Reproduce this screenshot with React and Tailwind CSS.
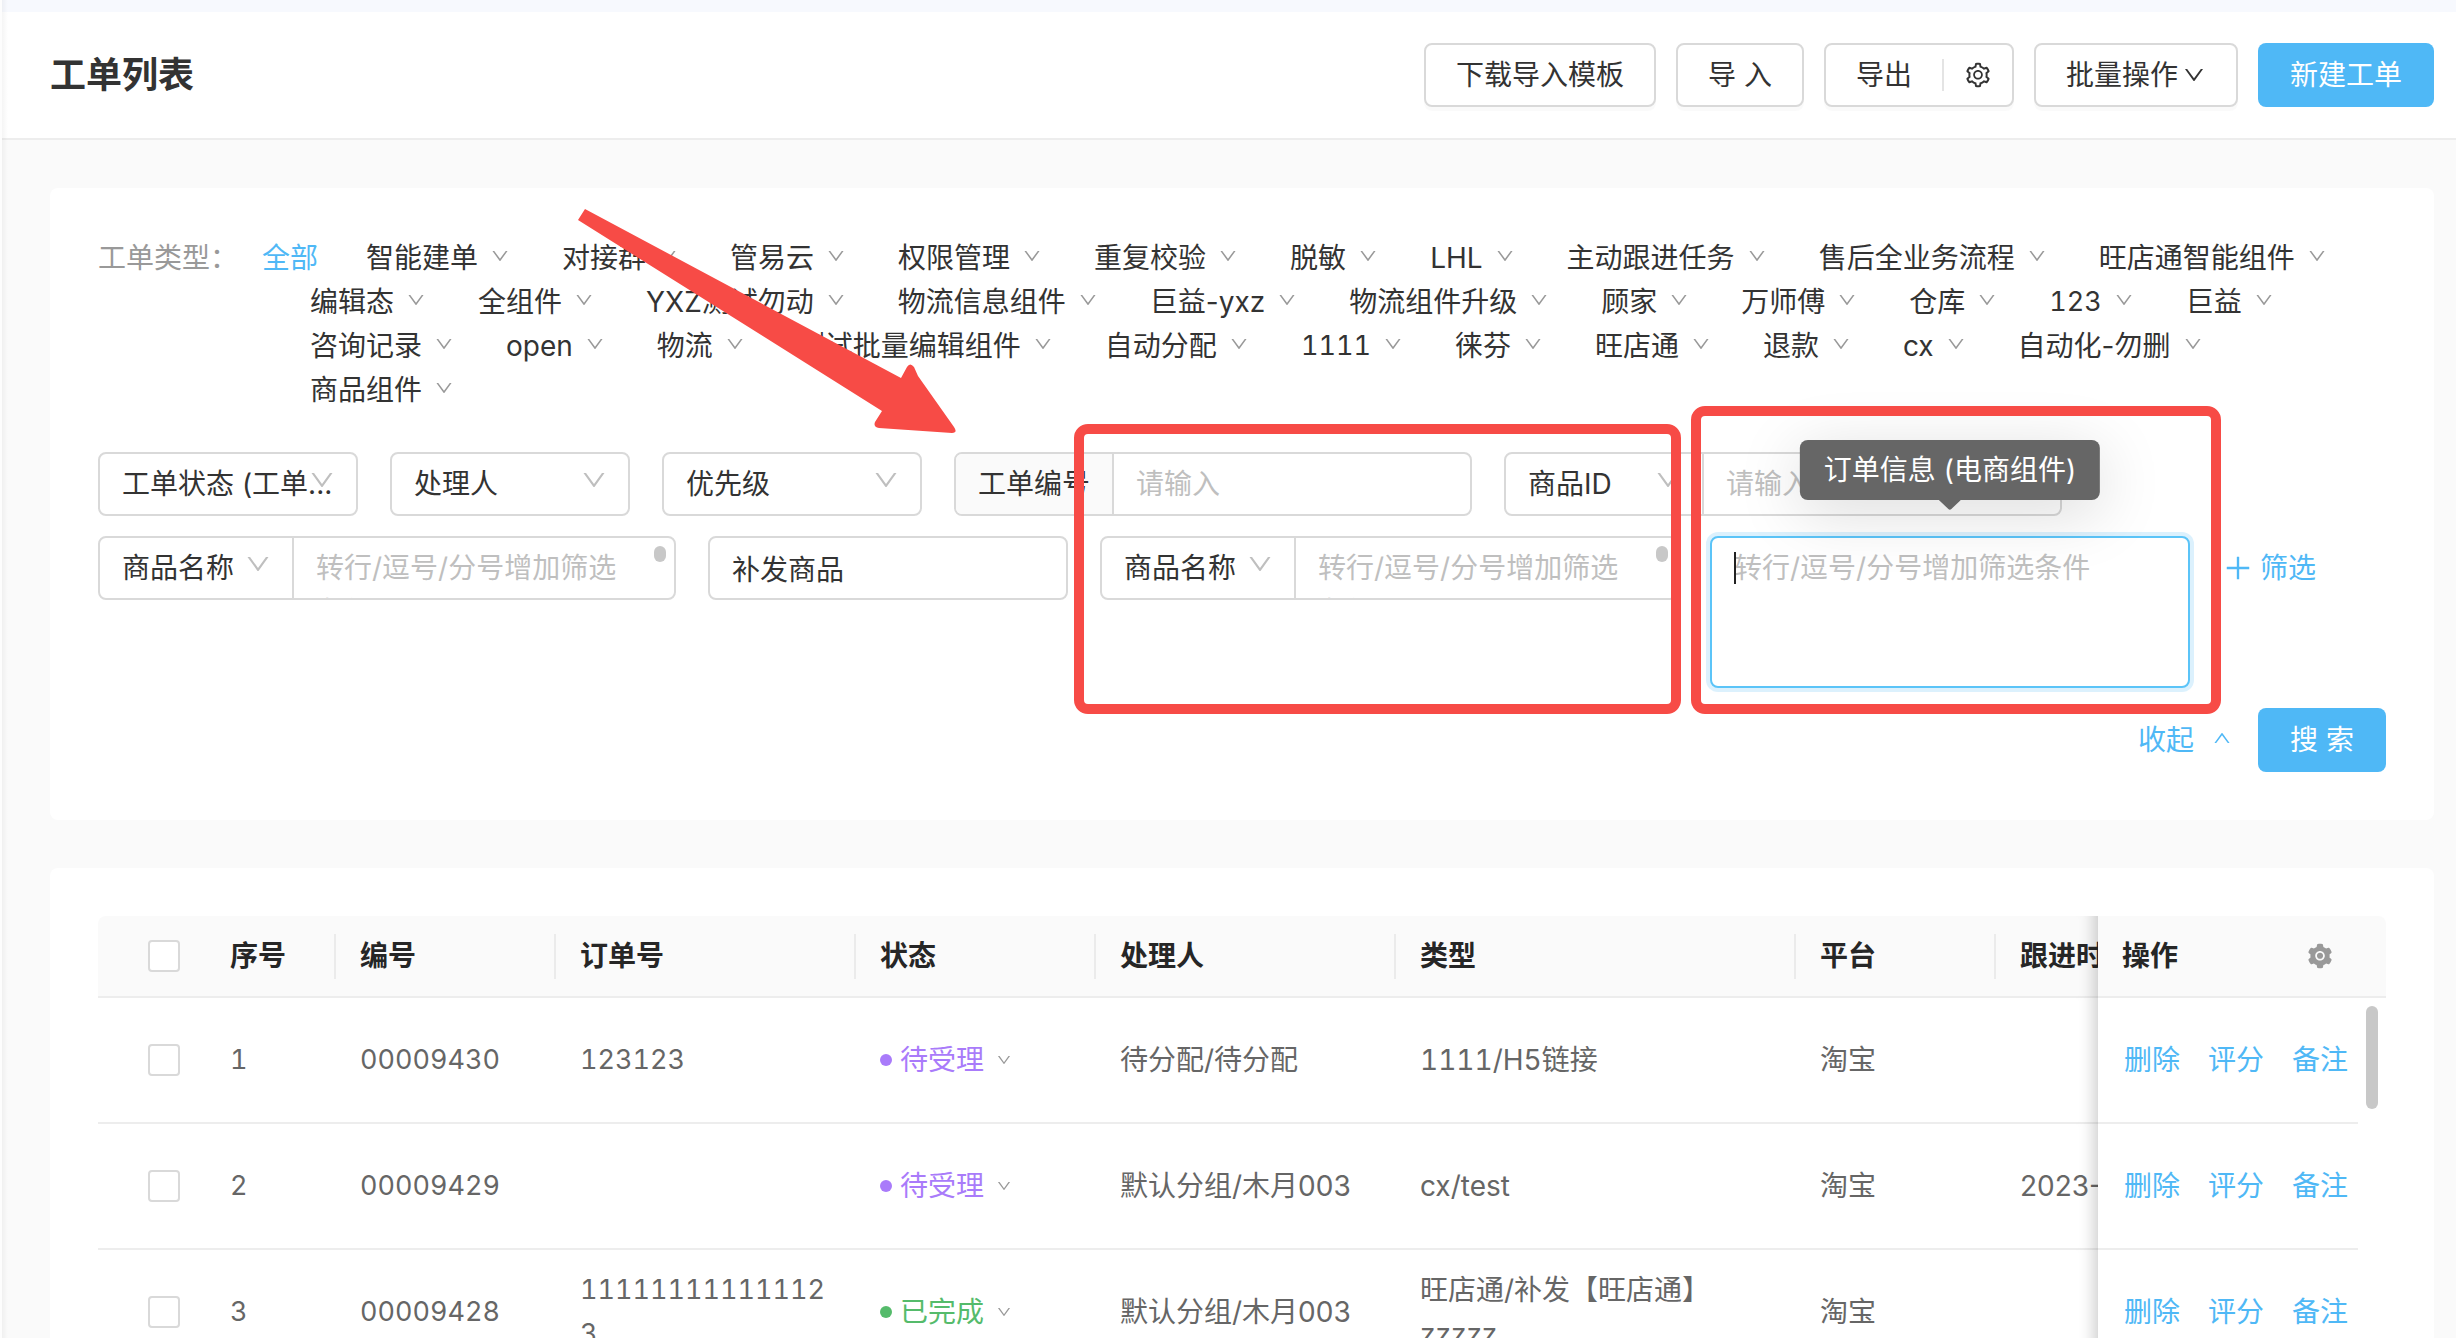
import React from "react";
import {
  AiOutlineDown,
  AiOutlineUp,
  AiOutlinePlus,
  AiOutlineSetting,
  AiFillSetting,
} from "react-icons/ai";

const TYPE_ROWS = [
  ["智能建单", "对接群", "管易云", "权限管理", "重复校验", "脱敏", "LHL", "主动跟进任务", "售后全业务流程", "旺店通智能组件"],
  ["编辑态", "全组件", "YXZ测试勿动", "物流信息组件", "巨益-yxz", "物流组件升级", "顾家", "万师傅", "仓库", "123", "巨益"],
  ["咨询记录", "open", "物流", "测试批量编辑组件", "自动分配", "1111", "徕芬", "旺店通", "退款", "cx", "自动化-勿删"],
  ["商品组件"],
];

const COLUMNS = [
  { title: "序号", width: "w-[130px]" },
  { title: "编号", width: "w-[220px]" },
  { title: "订单号", width: "w-[300px]" },
  { title: "状态", width: "w-[240px]" },
  { title: "处理人", width: "w-[300px]" },
  { title: "类型", width: "w-[400px]" },
  { title: "平台", width: "w-[200px]" },
  { title: "跟进时间", width: "w-[300px]" },
];

const ROWS = [
  { id: 1, no: "00009430", order: "123123", status: "待受理", owner: "待分配/待分配", type: "1111/H5链接", platform: "淘宝", follow: "" },
  { id: 2, no: "00009429", order: "", status: "待受理", owner: "默认分组/木月003", type: "cx/test", platform: "淘宝", follow: "2023-" },
  { id: 3, no: "00009428", order: "111111111111123", status: "已完成", owner: "默认分组/木月003", type: "旺店通/补发【旺店通】zzzzz", platform: "淘宝", follow: "" },
];

const STATUS_STYLE = {
  待受理: { text: "text-[#a97bfa]", dot: "bg-[#a97bfa]" },
  已完成: { text: "text-[#55bb6b]", dot: "bg-[#55bb6b]" },
};

function HeaderButton({ className = "", children }) {
  return (
    <button
      type="button"
      className={`flex h-16 items-center justify-center rounded-lg border-2 border-[#d9d9d9] bg-white px-[30px] shadow-[0_4px_0_rgba(0,0,0,0.02)] ${className}`}
    >
      {children}
    </button>
  );
}

function TypeItem({ label }) {
  const numeric = /^\d+$/.test(label);
  return (
    <button type="button" className={`mr-[52px] flex shrink-0 items-center gap-3 ${numeric ? "text-[27px] tabular-nums" : ""}`}>
      {label}
      <AiOutlineDown className="mb-1 size-5 text-[#999]" />
    </button>
  );
}

function Select({ label, className = "", selectClass = "rounded-lg" }) {
  return (
    <div className={`relative h-16 ${className}`}>
      <select
        aria-label={label}
        className={`size-full appearance-none border-2 border-[#d9d9d9] bg-white px-[22px] outline-none ${selectClass}`}
      >
        <option>{label}</option>
      </select>
      <AiOutlineDown className="pointer-events-none absolute top-[14px] right-[22px] size-7 text-[#bfbfbf]" />
    </div>
  );
}

function MultiLineFilter() {
  return (
    <div className="flex w-[578px]">
      <Select label="商品名称" className="w-[196px]" selectClass="rounded-l-lg" />
      <div className="relative -ml-0.5 h-16 flex-1">
        <textarea
          rows={1}
          aria-label="商品名称筛选"
          placeholder="转行/逗号/分号增加筛选条件"
          className="block size-full resize-none overflow-hidden rounded-r-lg border-2 border-[#d9d9d9] bg-white py-2 pr-10 pl-[22px] outline-none placeholder:text-[#bfbfbf]"
        />
        <span className="absolute top-2.5 right-2.5 h-4 w-3 rounded-full bg-[#c8c8c8]" />
      </div>
    </div>
  );
}

function Header() {
  return (
    <header className="flex items-center justify-between border-b-2 border-[#ededed] bg-white py-[31px] pr-[22px] pl-12">
      <h1 className="text-4xl font-semibold">工单列表</h1>
      <div className="flex gap-5">
        <HeaderButton>下载导入模板</HeaderButton>
        <HeaderButton>导 入</HeaderButton>
        <div className="flex h-16 items-center rounded-lg border-2 border-[#d9d9d9] bg-white pr-5 pl-[30px] shadow-[0_4px_0_rgba(0,0,0,0.02)]">
          <button type="button">导出</button>
          <span className="mr-5 ml-[30px] h-8 w-0.5 bg-[#e4e4e4]" />
          <button type="button" aria-label="导出设置">
            <AiOutlineSetting className="size-7" />
          </button>
        </div>
        <HeaderButton className="gap-1">
          批量操作
          <AiOutlineDown className="size-6" />
        </HeaderButton>
        <button type="button" className="h-16 rounded-lg bg-[#4fb8f6] px-8 text-white">
          新建工单
        </button>
      </div>
    </header>
  );
}

function TypeFilter() {
  return (
    <div className="flex flex-col">
      {TYPE_ROWS.map((row, i) => (
        <div key={i} className={i === 0 ? "flex h-11 items-center" : "flex h-11 items-center pl-[212px]"}>
          {i === 0 && (
            <>
              <span className="mr-6 text-[#999]">工单类型：</span>
              <button type="button" className="mr-12 text-[#4fb8f6]">全部</button>
            </>
          )}
          {row.map((label) => (
            <TypeItem key={label} label={label} />
          ))}
        </div>
      ))}
    </div>
  );
}

function FocusedFilter() {
  return (
    <div className="relative w-[480px]">
      <textarea
        aria-label="订单信息"
        placeholder="转行/逗号/分号增加筛选条件"
        className="block h-[152px] w-full resize-none rounded-lg border-2 border-[#5bc4f8] bg-white px-[22px] py-2 shadow-[0_0_0_4px_rgba(79,184,246,0.2)] outline-none placeholder:text-[#bfbfbf]"
      />
      <span className="absolute top-4 left-6 h-8 w-0.5 bg-[#222]" />
      <div
        role="tooltip"
        className="absolute bottom-full left-1/2 mb-9 flex h-[60px] -translate-x-1/2 items-center rounded-lg bg-[#666] px-6 whitespace-nowrap text-white shadow-[0_12px_64px_rgba(0,0,0,0.15)]"
      >
        订单信息 (电商组件)
        <svg viewBox="0 0 22 10" className="absolute top-full left-1/2 h-2.5 w-[22px] -translate-x-1/2" aria-hidden="true">
          <path d="M0 0H22L12.5 9Q11 10.5 9.5 9Z" fill="#666" />
        </svg>
      </div>
    </div>
  );
}

function Annotations() {
  return (
    <div className="pointer-events-none absolute inset-0" aria-hidden="true">
      <svg viewBox="0 0 384 230" className="absolute top-[18px] left-[526px] h-[230px] w-[384px]">
        <path
          d="M9 3 L325 172 L331 161 Q334 156 338 161 L342 170 L378 221 Q382 227 376 227 L303 222 Q297 221 299 216 L306 205 L2 14 Z"
          fill="#f74b46"
        />
      </svg>
      <div className="absolute top-[236px] left-[1024px] h-[290px] w-[607px] rounded-[14px] border-10 border-[#f74b46]" />
      <div className="absolute top-[218px] left-[1641px] h-[308px] w-[530px] rounded-[14px] border-10 border-[#f74b46]" />
    </div>
  );
}

function FilterCard() {
  return (
    <section className="relative rounded-lg bg-white p-12">
      <TypeFilter />
      <div className="mt-10 flex gap-8">
        <Select label="工单状态 (工单..." className="w-[260px]" />
        <Select label="处理人" className="w-[240px]" />
        <Select label="优先级" className="w-[260px]" />
        <div className="flex h-16 w-[518px] rounded-lg border-2 border-[#d9d9d9]">
          <label htmlFor="ticket-no" className="flex items-center rounded-l-md border-r-2 border-[#d9d9d9] bg-[#fafafa] px-[22px]">
            工单编号
          </label>
          <input id="ticket-no" placeholder="请输入" className="min-w-0 flex-1 rounded-r-md px-[22px] outline-none placeholder:text-[#bfbfbf]" />
        </div>
        <div className="flex w-[558px]">
          <Select label="商品ID" className="w-[200px]" selectClass="rounded-l-lg" />
          <input
            aria-label="商品ID值"
            placeholder="请输入"
            className="-ml-0.5 h-16 min-w-0 flex-1 rounded-r-lg border-2 border-[#d9d9d9] px-[22px] outline-none placeholder:text-[#bfbfbf]"
          />
        </div>
      </div>
      <div className="mt-5 flex items-start gap-8">
        <MultiLineFilter />
        <input aria-label="补发商品" defaultValue="补发商品" className="h-16 w-[360px] rounded-lg border-2 border-[#d9d9d9] px-[22px] outline-none" />
        <MultiLineFilter />
        <FocusedFilter />
        <button type="button" className="flex h-16 items-center gap-1.5 text-[#4fb8f6]">
          <AiOutlinePlus className="size-8" />
          筛选
        </button>
      </div>
      <div className="mt-5 flex items-center justify-end">
        <button type="button" className="mr-[26px] flex items-center gap-[18px] text-[#4fb8f6]">
          收起
          <AiOutlineUp className="mb-1 size-5" />
        </button>
        <button type="button" className="h-16 w-32 rounded-lg bg-[#4fb8f6] text-white">
          搜 索
        </button>
      </div>
      <Annotations />
    </section>
  );
}

function Checkbox({ label }) {
  return (
    <input
      type="checkbox"
      aria-label={label}
      className="block size-8 appearance-none rounded-sm border-2 border-[#d9d9d9] bg-white"
    />
  );
}

const FIXED =
  "sticky right-7 before:absolute before:top-0 before:right-full before:-bottom-0.5 before:w-[60px] before:shadow-[inset_-20px_0_16px_-16px_rgba(0,0,0,0.2)]";

function TicketTable() {
  return (
    <div className="overflow-hidden rounded-t-lg">
      <table className="w-full min-w-[2486px] table-fixed border-separate border-spacing-0 text-left text-[#666]">
        <thead className="text-[#262626]">
          <tr className="h-[82px]">
            <th className="w-[108px] border-b-2 border-[#ededed] bg-[#fafafa] pl-[50px]">
              <Checkbox label="全选" />
            </th>
            {COLUMNS.map((c) => (
              <th
                key={c.title}
                className={`relative border-b-2 border-[#ededed] bg-[#fafafa] px-6 font-semibold after:absolute after:top-[18px] after:right-0 after:h-[45px] after:w-0.5 after:bg-[#ebebeb] ${c.width}`}
              >
                {c.title}
              </th>
            ))}
            <th className={`w-[260px] border-b-2 border-[#ededed] bg-[#fafafa] px-6 font-semibold ${FIXED}`}>
              <div className="flex items-center justify-between">
                操作
                <button type="button" aria-label="列设置" className="text-[#999]">
                  <AiFillSetting className="size-7" />
                </button>
              </div>
            </th>
            <th aria-label="滚动条" className="sticky right-0 w-7 border-b-2 border-[#ededed] bg-[#fafafa]" />
          </tr>
        </thead>
        <tbody>
          {ROWS.map((r, i) => (
            <tr key={r.id} className="h-[126px] [&>td]:border-[#ededed]">
              <td className="border-b-2 pl-[50px]">
                <Checkbox label={`选择 ${r.no}`} />
              </td>
              <td className="border-b-2 px-6 text-[27px] tabular-nums">{r.id}</td>
              <td className="border-b-2 px-6 text-[27px] tabular-nums">{r.no}</td>
              <td className="border-b-2 px-6 text-[27px] break-all tabular-nums">{r.order}</td>
              <td className="border-b-2 px-6">
                <button type="button" className={`flex items-center gap-2 ${STATUS_STYLE[r.status].text}`}>
                  <span className={`size-3 rounded-full ${STATUS_STYLE[r.status].dot}`} />
                  {r.status}
                  <AiOutlineDown className="ml-1 size-4 text-[#999]" />
                </button>
              </td>
              <td className="border-b-2 px-6">{r.owner}</td>
              <td className="border-b-2 px-6 tabular-nums">{r.type}</td>
              <td className="border-b-2 px-6">{r.platform}</td>
              <td className="border-b-2 px-6 whitespace-nowrap">{r.follow}</td>
              <td className={`border-b-2 bg-white px-6 ${FIXED}`}>
                <div className="flex gap-7 pl-0.5 whitespace-nowrap text-[#4fb8f6]">
                  <a href="#delete">删除</a>
                  <a href="#rate">评分</a>
                  <a href="#note">备注</a>
                </div>
              </td>
              {i === 0 && (
                <td rowSpan={ROWS.length} className="sticky right-0 bg-white pt-2 pl-2 align-top">
                  <div className="h-[103px] w-3 rounded-full bg-[#c8c8c8]" />
                </td>
              )}
            </tr>
          ))}
        </tbody>
      </table>
    </div>
  );
}

export default function App() {
  return (
    <div className="relative flex h-screen flex-col overflow-hidden border-l-2 border-[#fdfdfd] bg-[#fafafa] font-['Inter','Noto_Sans_CJK_SC',sans-serif] text-[28px] leading-[44px] text-[#333]">
      <div className="h-3 shrink-0 bg-[#f7f9fe]" />
      <Header />
      <main className="flex min-h-0 flex-1 flex-col gap-12 overflow-hidden pt-12 pr-[22px] pl-12">
        <FilterCard />
        <section className="rounded-lg bg-white p-12">
          <TicketTable />
        </section>
      </main>
      <div className="pointer-events-none absolute inset-y-0 left-0 w-1.5 bg-linear-to-r from-black/4 to-transparent" />
    </div>
  );
}
